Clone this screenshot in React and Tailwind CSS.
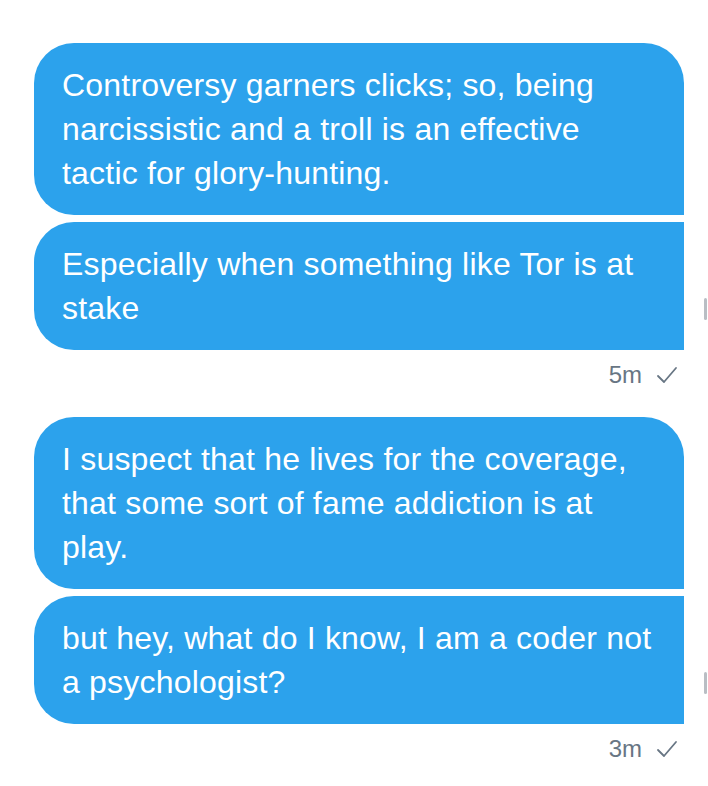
import React from "react";

const font = { fontFamily: '"Helvetica Neue", "Liberation Sans", Arial, sans-serif' };

function Bubble({ children, first }) {
  return (
    <div
      className={
        "bg-[#2ca2ec] text-white text-[32px] leading-[44px] tracking-[0.2px] pl-[28px] pr-[28px] py-[20px] " +
        (first ? "rounded-tl-[40px] rounded-tr-[40px] rounded-bl-[40px]" : "rounded-tl-[40px] rounded-bl-[40px]")
      }
    >
      {children}
    </div>
  );
}

function Meta({ time }) {
  return (
    <div className="flex justify-end items-center gap-[14px] pr-[6px] mt-[13px] h-[24px] text-[#687684] text-[24px]">
      <span>{time}</span>
      <svg width="22" height="20" viewBox="0 0 22 20" fill="none">
        <path d="M2 11 L8 17 L20 3" stroke="#687684" strokeWidth="1.8" strokeLinecap="round" strokeLinejoin="round" />
      </svg>
    </div>
  );
}

function Group({ first, second, time }) {
  return (
    <div className="relative">
      <div className="flex flex-col gap-[7px]">
        <Bubble first>{first}</Bubble>
        <div className="relative">
          <Bubble>{second}</Bubble>
          <div className="absolute right-[-23px] top-[76px] w-[3px] h-[22px] rounded-full bg-[#b9bec4]" />
        </div>
      </div>
      <Meta time={time} />
    </div>
  );
}

export default function App() {
  return (
    <div className="w-[708px] h-[786px] bg-white overflow-hidden" style={font}>
      <div className="pl-[34px] pr-[24px] pt-[43px] flex flex-col gap-[30px]">
        <Group
          first="Controversy garners clicks; so, being narcissistic and a troll is an effective tactic for glory-hunting."
          second="Especially when something like Tor is at stake"
          time="5m"
        />
        <Group
          first="I suspect that he lives for the coverage, that some sort of fame addiction is at play."
          second="but hey, what do I know, I am a coder not a psychologist?"
          time="3m"
        />
      </div>
    </div>
  );
}
